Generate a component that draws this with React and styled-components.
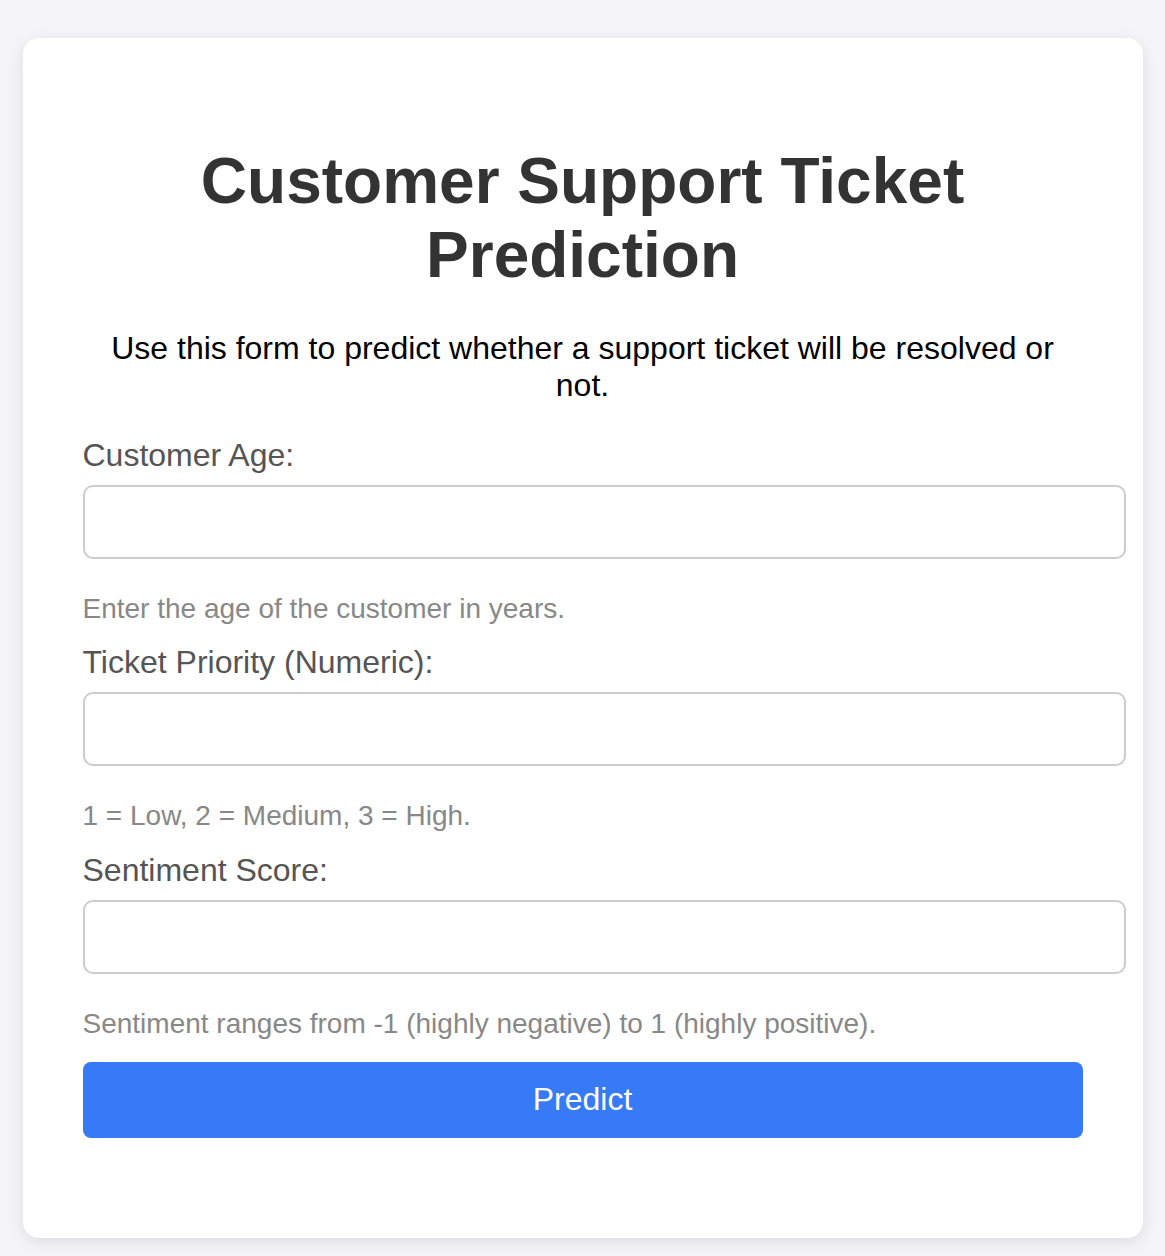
import React from "react";
import styled, { createGlobalStyle } from "styled-components";

const GlobalStyle = createGlobalStyle`
  html, body {
    margin: 0;
    padding: 0;
    background-color: #f4f4f9;
    font-family: "Liberation Sans", Arial, sans-serif;
  }
`;

const fields = [
  {
    id: "age",
    label: "Customer Age:",
    help: "Enter the age of the customer in years.",
  },
  {
    id: "priority",
    label: "Ticket Priority (Numeric):",
    help: "1 = Low, 2 = Medium, 3 = High.",
  },
  {
    id: "sentiment",
    label: "Sentiment Score:",
    help: "Sentiment ranges from -1 (highly negative) to 1 (highly positive).",
  },
];

const App = () => {
  return (
    <>
      <GlobalStyle />
      <Page>
        <Card>
          <Title>Customer Support Ticket Prediction</Title>
          <Intro>
            Use this form to predict whether a support ticket will be resolved
            or not.
          </Intro>
          <Form onSubmit={(e) => e.preventDefault()}>
            {fields.map((field) => (
              <Field key={field.id}>
                <Label htmlFor={field.id}>{field.label}</Label>
                <Input id={field.id} type="number" />
                <Help>{field.help}</Help>
              </Field>
            ))}
            <SubmitButton type="submit">Predict</SubmitButton>
          </Form>
        </Card>
      </Page>
    </>
  );
};

const Page = styled.div`
  padding: 38px 0;
`;

const Card = styled.div`
  width: 1120px;
  margin: 0 auto;
  box-sizing: border-box;
  padding: 60px 60px 100px;
  background-color: #fff;
  border-radius: 16px;
  box-shadow: 0 4px 16px rgba(0, 0, 0, 0.1);
`;

const Title = styled.h1`
  margin: 46px 0 38px;
  font-size: 64px;
  font-weight: 700;
  color: #333;
  text-align: center;
`;

const Intro = styled.p`
  margin: 0 0 32.5px;
  font-size: 32px;
  color: #000;
  text-align: center;
`;

const Form = styled.form`
  display: flex;
  flex-direction: column;
`;

const Field = styled.div`
  display: flex;
  flex-direction: column;
  align-items: flex-start;
`;

const Label = styled.label`
  display: block;
  margin-bottom: 11px;
  font-size: 32px;
  color: #555;
`;

const Input = styled.input`
  box-sizing: content-box;
  width: 100%;
  height: 70px;
  padding: 0 19.5px;
  border: 2px solid #ccc;
  border-radius: 10px;
  font-family: inherit;
  font-size: 30px;
  background: #fff;
  outline: none;
`;

const Help = styled.p`
  margin: 34px 0 19.7px;
  font-size: 28px;
  color: #888;
`;

const SubmitButton = styled.button`
  width: 100%;
  height: 76px;
  margin-top: 2px;
  border: none;
  border-radius: 8px;
  background-color: #367af6;
  color: #fff;
  font-family: inherit;
  font-size: 32px;
  cursor: pointer;
`;

export default App;
